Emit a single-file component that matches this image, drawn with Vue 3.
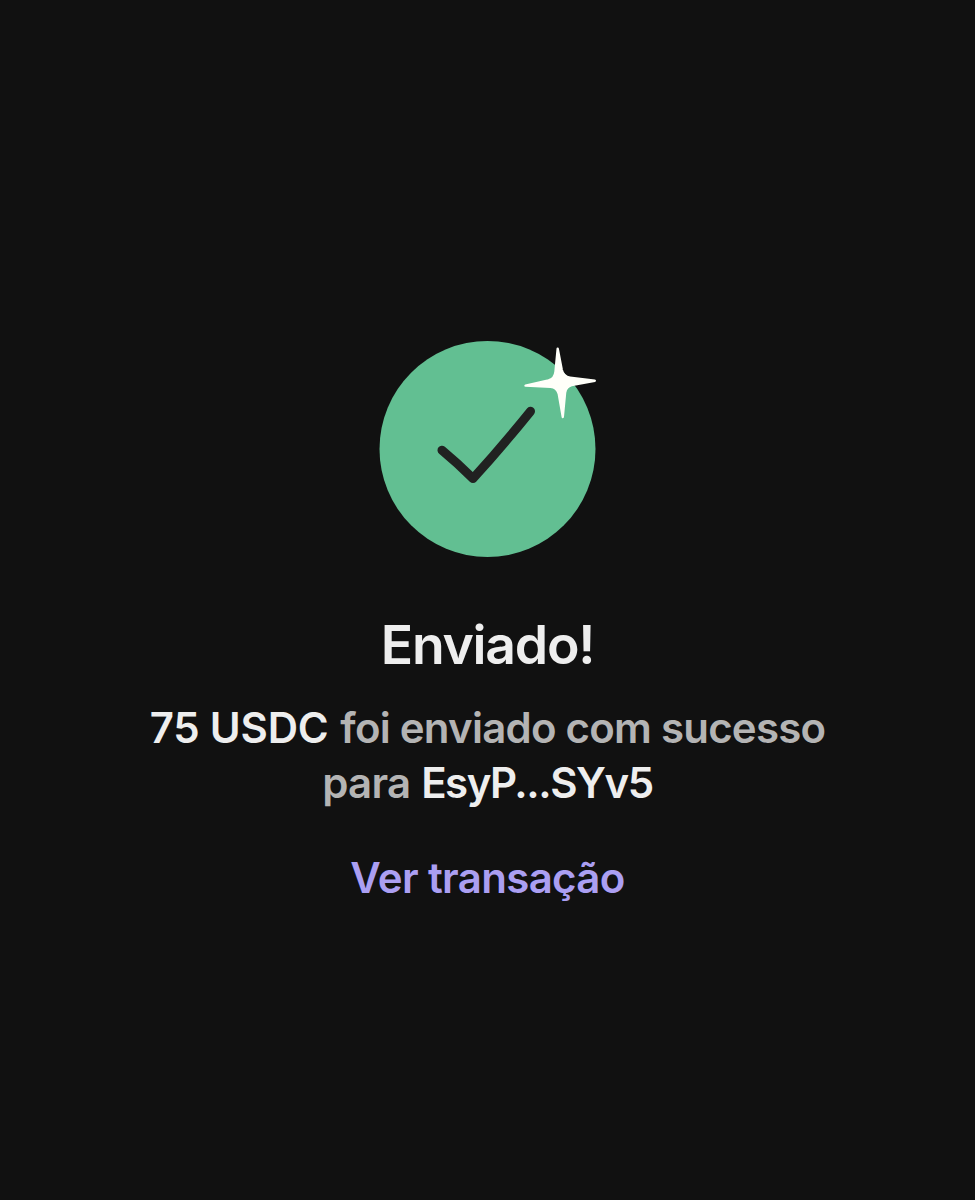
<script setup>
const transfer = {
  amount: '75 USDC',
  recipient: 'EsyP...SYv5',
}
</script>

<template>
  <main class="screen">
    <svg class="badge" viewBox="0 0 220 220" aria-hidden="true">
      <circle class="disc" cx="109.5" cy="110" r="108" />
      <path class="check" d="M64 111.2Q79.5 124 95 139.5Q124.5 107 152.5 72.3" />
      <path
        class="sparkle"
        d="M179.7 9.7L183.8 31Q185.4 37.8 192 38.7L216.8 41.7L193.5 46.1Q188.2 47.6 187.1 53.5L184.8 78L180.8 55Q179 48.5 172.5 47.9L147.5 46.6L170.5 41.5Q176.8 39.6 177.5 32.5Z"
      />
    </svg>

    <h1 class="title">Enviado!</h1>
    <p class="message">
      <strong class="amount">{{ transfer.amount }}</strong> foi enviado com sucesso<br />
      para <strong class="recipient">{{ transfer.recipient }}</strong>
    </p>
    <a class="link">Ver transação</a>
  </main>
</template>

<style>
body { margin: 0; background: #111111; }
</style>

<style scoped>
.screen {
  display: flex;
  flex-direction: column;
  align-items: center;
  box-sizing: border-box;
  min-height: 1200px;
  padding-top: 339px;
  background: #111111;
  font-family: Inter, "Liberation Sans", sans-serif;
  text-align: center;
}

.badge { display: block; width: 220px; height: 220px; }
.disc { fill: #62bf92; }
.check { fill: none; stroke: #212121; stroke-width: 9; stroke-linecap: round; stroke-linejoin: round; }
.sparkle { fill: #fffff9; stroke: #fffff9; stroke-width: 2.4; stroke-linejoin: round; }

.title {
  margin: 54px 0 0;
  color: #eeeeee;
  font-size: 53.5px;
  font-weight: 600;
  line-height: 64px;
  letter-spacing: -1.25px;
}

.message {
  margin: 23px 0 0;
  color: #b4b4b4;
  font-size: 42px;
  font-weight: 600;
  line-height: 55px;
  letter-spacing: -0.77px;
  white-space: nowrap;
}
.message strong { color: #eeeeee; font-weight: 600; }
.amount { margin-right: 2px; letter-spacing: -0.2px; }
.recipient { margin-left: 1px; letter-spacing: -1.45px; }

.link {
  margin-top: 40px;
  color: #ab9ff2;
  font-size: 42px;
  font-weight: 600;
  line-height: 55px;
  letter-spacing: -0.65px;
  cursor: pointer;
}
</style>
